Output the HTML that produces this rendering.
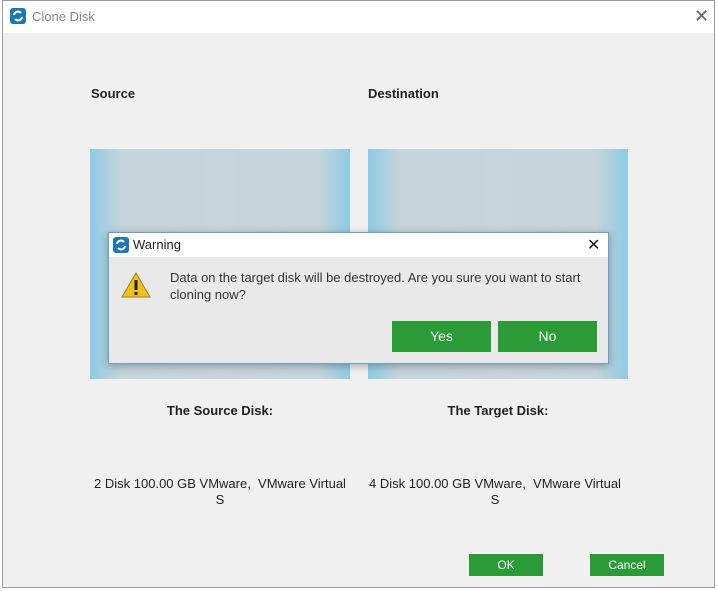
<!DOCTYPE html>
<html><head><style>
body{margin:0;width:718px;height:591px;background:#fff;font-family:"Liberation Sans",sans-serif;position:relative;overflow:hidden}
.win{position:absolute;left:2px;top:0;width:713px;height:588px;border:1px solid #9a9a9a;background:#f0f0f0;box-sizing:border-box}
.tb{position:absolute;left:0;top:0;right:0;height:32px;background:#fff}
.a{position:absolute}
.panel{position:absolute;top:149px;width:260px;height:230px;background:linear-gradient(90deg,#8dcbe6 0%,#c4d4da 12%,#c8d5db 50%,#c4d4da 88%,#8dcbe6 100%)}
.btn{position:absolute;background:#2a9b36;color:#fff;text-align:center;font-size:14px}
.lbl{position:absolute;font-size:13px;font-weight:bold;color:#222}
.txt{position:absolute;font-size:13px;color:#222;text-align:center}
</style></head><body>
<div class="win">
<div class="tb"></div>
</div>
<svg class="a" style="left:10px;top:8px" width="16" height="16" viewBox="0 0 16 16"><rect width="16" height="16" rx="3" fill="#1a78b8"/><path d="M4 7a4 4 0 0 1 7-2M12 9a4 4 0 0 1-7 2" stroke="#fff" stroke-width="2" fill="none"/></svg>
<div class="a" style="left:32px;top:9px;font-size:13px;color:#888">Clone Disk</div>
<div class="a" style="left:694px;top:6px;font-size:18px;color:#666">✕</div>
<div class="lbl" style="left:91px;top:86px">Source</div>
<div class="lbl" style="left:368px;top:86px">Destination</div>
<div class="panel" style="left:90px"></div>
<div class="panel" style="left:368px"></div>
<div class="lbl" style="left:90px;width:260px;text-align:center;top:403px">The Source Disk:</div>
<div class="lbl" style="left:368px;width:260px;text-align:center;top:403px">The Target Disk:</div>
<div class="txt" style="left:90px;width:260px;top:476px;line-height:16px">2 Disk 100.00 GB VMware,&nbsp; VMware Virtual S</div>
<div class="txt" style="left:365px;width:260px;top:476px;line-height:16px">4 Disk 100.00 GB VMware,&nbsp; VMware Virtual S</div>
<div class="btn" style="left:469px;top:554px;width:74px;height:22px;line-height:22px;font-size:12px">OK</div>
<div class="btn" style="left:590px;top:554px;width:74px;height:22px;line-height:22px;font-size:12px">Cancel</div>
<div class="a" style="left:108px;top:232px;width:501px;height:132px;background:#e9e9e9;border:1px solid #6d9ecb;box-sizing:border-box;box-shadow:0 2px 8px rgba(0,0,0,.3)">
<div class="a" style="left:0;top:0;right:0;height:24px;background:#fff"></div>
<svg class="a" style="left:4px;top:4px" width="16" height="16" viewBox="0 0 16 16"><rect width="16" height="16" rx="3" fill="#1a78b8"/><path d="M4 7a4 4 0 0 1 7-2M12 9a4 4 0 0 1-7 2" stroke="#fff" stroke-width="2" fill="none"/></svg>
<div class="a" style="left:24px;top:4px;font-size:13px;color:#222">Warning</div>
<div class="a" style="left:478px;top:2px;font-size:16px;color:#222">✕</div>
<svg class="a" style="left:11px;top:38px" width="32" height="28" viewBox="0 0 32 28"><path d="M16 2L30 26H2Z" fill="#f2c21a" stroke="#a08020"/><rect x="14.5" y="9" width="3" height="10" fill="#222"/><rect x="14.5" y="21" width="3" height="3" fill="#222"/></svg>
<div class="a" style="left:61px;top:36px;font-size:13px;color:#333;line-height:17px;width:430px">Data on the target disk will be destroyed. Are you sure you want to start cloning now?</div>
<div class="btn" style="left:283px;top:88px;width:99px;height:31px;line-height:31px">Yes</div>
<div class="btn" style="left:389px;top:88px;width:99px;height:31px;line-height:31px">No</div>
</div>
</body></html>
